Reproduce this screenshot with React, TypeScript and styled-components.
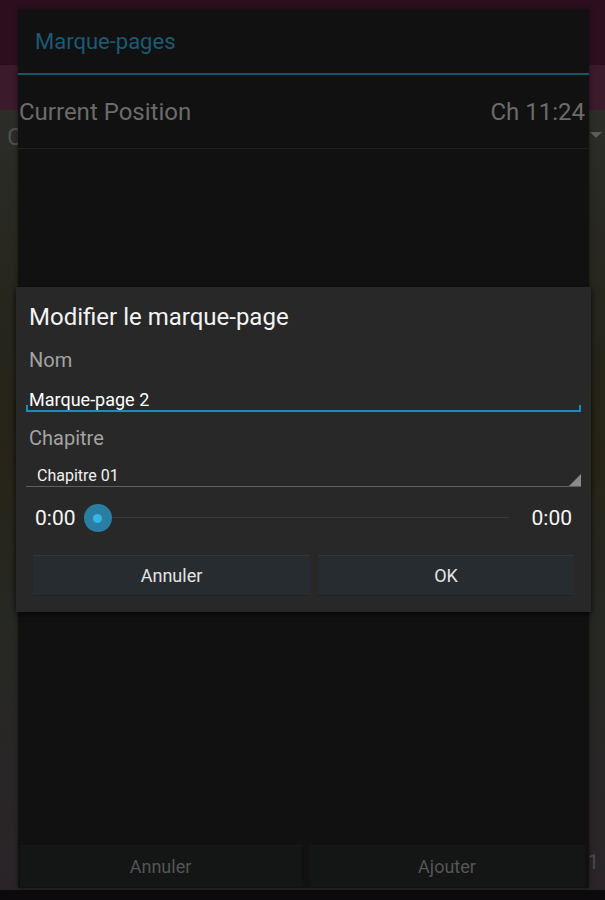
import React from "react";
import styled, { createGlobalStyle } from "styled-components";

const GlobalStyle = createGlobalStyle`
  html, body { margin: 0; padding: 0; background: #0b0b0b; }
  body { font-family: Roboto, "Noto Sans", "Liberation Sans", sans-serif; }
  * { box-sizing: border-box; }
`;

const Screen = styled.div`
  position: relative;
  width: 605px;
  height: 900px;
  overflow: hidden;
  display: flex;
  flex-direction: column;
  background: #0b0b0b;
`;

const AppBar = styled.div`
  height: 65px;
  background: #2c0f1f;
  flex: none;
`;

const SubBar = styled.div`
  height: 45px;
  background: #3a1a2b;
  flex: none;
`;

const AppContent = styled.div`
  flex: 1;
  display: flex;
  flex-direction: column;
  background: linear-gradient(
    180deg,
    #2c2c29 0%,
    #26261d 25%,
    #282417 45%,
    #262823 65%,
    #2a2428 100%
  );
`;

const ContentRow = styled.div`
  height: 54px;
  display: flex;
  align-items: center;
  justify-content: space-between;
  padding: 0 3px 0 7px;
`;

const Letter = styled.span`
  font-size: 24px;
  color: #4f4f4d;
`;

const Caret = styled.span`
  width: 0;
  height: 0;
  border-left: 6px solid transparent;
  border-right: 6px solid transparent;
  border-top: 6px solid #5c5c58;
  margin-top: -4px;
`;

const ContentFill = styled.div`
  flex: 1;
`;

const PageNumRow = styled.div`
  display: flex;
  justify-content: flex-end;
  padding: 0 6px 16px 0;
`;

const PageNum = styled.span`
  font-size: 20px;
  color: #4a4a4a;
`;

const NavStrip = styled.div`
  height: 10px;
  background: #0c0a0c;
  flex: none;
`;

const ListDialog = styled.div`
  position: absolute;
  left: 18px;
  top: 9px;
  width: 571px;
  height: 879px;
  background: #111111;
  display: flex;
  flex-direction: column;
  box-shadow: 0 0 4px rgba(0, 0, 0, 0.5);
`;

const ListTitle = styled.div`
  height: 66px;
  display: flex;
  align-items: center;
  padding-left: 17px;
  font-size: 22px;
  color: #1b5a74;
  border-bottom: 2px solid #13566e;
`;

const PositionRow = styled.div`
  height: 74px;
  display: flex;
  align-items: center;
  justify-content: space-between;
  padding: 0 4px 0 1px;
  font-size: 24px;
  color: #6b6b6b;
  border-bottom: 1px solid #212121;
`;

const ListBody = styled.div`
  flex: 1;
`;

const ListButtons = styled.div`
  display: grid;
  grid-template-columns: 281px 276px;
  gap: 8px;
  padding: 0 0 1px 2px;
`;

const GhostButton = styled.div`
  height: 42px;
  display: flex;
  align-items: center;
  justify-content: center;
  background: #141515;
  border-top: 1px solid #181919;
  font-size: 18px;
  color: #555555;
`;

const EditDialog = styled.div`
  position: absolute;
  left: 16px;
  top: 287px;
  width: 575px;
  background: #282828;
  box-shadow: 0 2px 6px rgba(0, 0, 0, 0.7);
  display: flex;
  flex-direction: column;
  padding: 15px 0 16px 0;
`;

const DialogTitle = styled.div`
  font-size: 24px;
  line-height: 30px;
  color: #f4f4f4;
  padding-left: 13px;
`;

const FieldLabel = styled.div<{ $gap: number }>`
  font-size: 20px;
  line-height: 24px;
  color: #a3a3a3;
  padding-left: 13px;
  margin-top: ${(p) => p.$gap}px;
`;

const TextInput = styled.div`
  position: relative;
  margin: 17px 10px 0 10px;
  padding-left: 3px;
  font-size: 18px;
  line-height: 21px;
  color: #ffffff;
  border-bottom: 2px solid #1c8dbb;
  &::before,
  &::after {
    content: "";
    position: absolute;
    bottom: 0;
    width: 2px;
    height: 5px;
    background: #1c8dbb;
  }
  &::before { left: 0; }
  &::after { right: 0; }
`;

const Spinner = styled.div`
  position: relative;
  margin: 15px 10px 0 10px;
  padding-left: 11px;
  font-size: 16px;
  line-height: 21px;
  color: #f2f2f2;
  border-bottom: 1px solid #5e5e5e;
`;

const SpinnerCorner = styled.span`
  position: absolute;
  right: 0;
  bottom: 0;
  width: 0;
  height: 0;
  border-left: 12px solid transparent;
  border-bottom: 12px solid #8a8a8a;
`;

const SeekRow = styled.div`
  height: 30px;
  margin-top: 16px;
  display: flex;
  align-items: center;
  padding: 0 19px;
`;

const TimeText = styled.span`
  font-size: 21px;
  color: #f6f6f6;
`;

const SeekBar = styled.div`
  position: relative;
  flex: 1;
  height: 30px;
  margin: 0 23px 0 8px;
`;

const SeekTrack = styled.div`
  position: absolute;
  left: 14px;
  right: 0;
  top: 14px;
  height: 1px;
  background: #3b3b3b;
`;

const SeekThumb = styled.div`
  position: absolute;
  left: 0;
  top: 1px;
  width: 28px;
  height: 28px;
  border-radius: 50%;
  background: #2a7ea3;
  display: flex;
  align-items: center;
  justify-content: center;
  &::after {
    content: "";
    width: 9px;
    height: 9px;
    border-radius: 50%;
    background: #37b6e6;
  }
`;

const ActionRow = styled.div`
  display: grid;
  grid-template-columns: 277px 256px;
  gap: 8px;
  padding-left: 17px;
  margin-top: 22px;
`;

const ActionButton = styled.div`
  height: 41px;
  display: flex;
  align-items: center;
  justify-content: center;
  background: #272c30;
  border-top: 1px solid #33373a;
  border-bottom: 1px solid #202326;
  font-size: 18px;
  color: #e4e4e4;
`;

export default function App() {
  return (
    <>
      <GlobalStyle />
      <Screen>
        <AppBar />
        <SubBar />
        <AppContent>
          <ContentRow>
            <Letter>C</Letter>
            <Caret />
          </ContentRow>
          <ContentFill />
          <PageNumRow>
            <PageNum>1</PageNum>
          </PageNumRow>
        </AppContent>
        <NavStrip />

        <ListDialog>
          <ListTitle>Marque-pages</ListTitle>
          <PositionRow>
            <span>Current Position</span>
            <span>Ch 11:24</span>
          </PositionRow>
          <ListBody />
          <ListButtons>
            <GhostButton>Annuler</GhostButton>
            <GhostButton>Ajouter</GhostButton>
          </ListButtons>
        </ListDialog>

        <EditDialog>
          <DialogTitle>Modifier le marque-page</DialogTitle>
          <FieldLabel $gap={16}>Nom</FieldLabel>
          <TextInput>Marque-page 2</TextInput>
          <FieldLabel $gap={14}>Chapitre</FieldLabel>
          <Spinner>
            Chapitre 01
            <SpinnerCorner />
          </Spinner>
          <SeekRow>
            <TimeText>0:00</TimeText>
            <SeekBar>
              <SeekTrack />
              <SeekThumb />
            </SeekBar>
            <TimeText>0:00</TimeText>
          </SeekRow>
          <ActionRow>
            <ActionButton>Annuler</ActionButton>
            <ActionButton>OK</ActionButton>
          </ActionRow>
        </EditDialog>
      </Screen>
    </>
  );
}
